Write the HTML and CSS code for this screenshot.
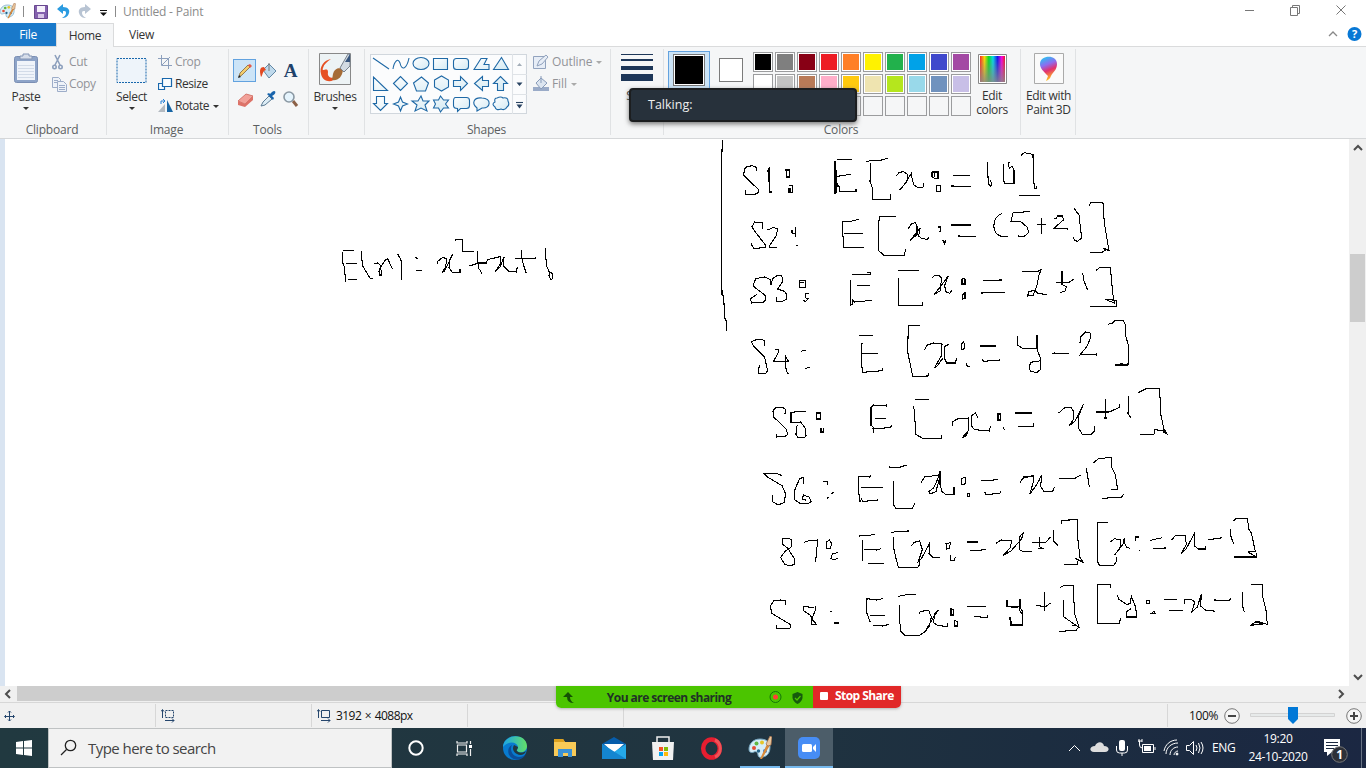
FILE: index.html
```html
<!DOCTYPE html>
<html lang="en">
<head>
<meta charset="utf-8">
<title>Untitled - Paint</title>
<link rel="stylesheet" href="styles.css">
</head>
<body>
<svg width="0" height="0" class="defs">
  <defs>
    <linearGradient id="rainbow"><stop offset="0" stop-color="#f22"/><stop offset=".18" stop-color="#fd0"/><stop offset=".35" stop-color="#0d2"/><stop offset=".52" stop-color="#0de"/><stop offset=".7" stop-color="#11e"/><stop offset=".87" stop-color="#f0d"/><stop offset="1" stop-color="#e12"/></linearGradient>
    <linearGradient id="fade" x2="0" y2="1"><stop offset="0" stop-color="#888" stop-opacity="0"/><stop offset="1" stop-color="#888" stop-opacity=".85"/></linearGradient>
    <linearGradient id="drop" x2=".3" y2="1"><stop offset="0" stop-color="#15d5f2"/><stop offset=".4" stop-color="#8d6cf0"/><stop offset=".65" stop-color="#e3306e"/><stop offset="1" stop-color="#ffbd20"/></linearGradient>
    <linearGradient id="edge1" x2="1"><stop offset="0" stop-color="#1ba4e8"/><stop offset="1" stop-color="#63df67"/></linearGradient>
    <linearGradient id="shapefill" x2="1" y2="1"><stop offset="0" stop-color="#fff"/><stop offset="1" stop-color="#d4eaf3"/></linearGradient>
    <symbol id="palette" viewBox="0 0 24 24">
      <path d="M12 3C5 3 1 8 1 13c0 4 3 4 5 3 2-1 4 0 4 3 0 2 2 3 5 2 5-1 7-5 7-10 0-5-4-8-10-8z" fill="#d7eef8" stroke="#72a4bf"/>
      <circle cx="6" cy="12" r="2" fill="#e54c35"/><circle cx="8.500" cy="7.500" r="2" fill="#62b743"/><circle cx="14" cy="6.500" r="2" fill="#e6c629"/><circle cx="10.500" cy="15" r="1.700" fill="#25658b"/><circle cx="17" cy="15" r="2" fill="#3379cd"/>
      <path d="M12 23l7-15 3 1-8 14z" fill="#d98a3a"/><path d="M18 8l4-8 2 1-1 8-3 1z" fill="#e9c69c" stroke="#9b6543" stroke-width=".7"/>
    </symbol>
  </defs>
</svg>
<div class="screen">
  <header class="titlebar">
    <svg class="title-icons" width="116" height="23" fill="none">
      <use href="#palette" x="-1" y="3" width="17" height="16"/>
      <path d="M23.500 6v11M115.500 6v11" stroke="#8b8b8b"/>
      <path d="M34.500 5.500h13v13h-13z" fill="#8461ae" stroke="#68478f"/><path d="M37 6h8v6h-8z" fill="#f6f1fb"/><path d="M38 14h6v4h-6z" fill="#d7c6e8"/>
      <path d="M57 9l6-5v3c5 0 7 3 6 6-1 4-4 5-7 5 3-2 4-3 4-5s-1-2-3-2v3z" fill="#2b9be0"/>
      <path d="M91 9l-6-5v3c-5 0-7 3-6 6 1 4 4 5 7 5-3-2-4-3-4-5s1-2 3-2v3z" fill="#b8c4d3"/>
      <path d="M100 10.500h7" stroke="#111"/><path d="M100 12.500h7l-3.500 3.500z" fill="#111"/>
    </svg>
    <span class="title">Untitled - Paint</span>
    <svg class="window-controls" width="120" height="23" fill="none" stroke="#777">
      <path d="M-1 10.500h9M44.500 7.500h7v8h-7zM46.500 7V5.500h7v8H52M90.500 5.500l9 9M99.500 5.500l-9 9"/>
    </svg>
  </header>
  <nav class="tabs">
    <span class="tab file">File</span><span class="tab home">Home</span><span class="tab view">View</span>
    <svg class="help" width="38" height="22" fill="none"><path d="M1 13l4-4 4 4" stroke="#888" stroke-width="1.300"/><circle cx="26.500" cy="11" r="7" fill="#0878d5"/><text x="26.500" y="15" text-anchor="middle" class="qmark">?</text></svg>
  </nav>

  <section class="ribbon">
    <div class="group g-clipboard">
      <div class="body">
        <div class="big paste"><svg width="26" height="31" fill="none"><rect x="1.500" y="3.500" width="23" height="26" rx="2" fill="#8ea4c8" stroke="#7b8fb4"/><path d="M4 8h18v19H4z" fill="#f0f4fa"/><path d="M5 12.500h16M5 15.500h16M5 18.500h16M5 21.500h16M5 24.500h16" stroke="#d2dbe8"/><path d="M7 6V3h3V1h6v2h3v3z" fill="#d7deea" stroke="#8395b5"/></svg><span>Paste</span><i class="caret"></i></div>
        <div class="small-list disabled">
          <div class="small"><svg width="15" height="17" fill="none" stroke="#8da0bd" stroke-width="1.600"><path d="M3 1l5 10M8 1L3 11"/><circle cx="2.500" cy="13" r="1.700"/><circle cx="8.500" cy="13" r="1.700"/></svg>Cut</div>
          <div class="small"><svg width="15" height="17" fill="#eef2f8" stroke="#9dadc9"><path d="M.5 1.500h6l2 2v8h-8z"/><path d="M5.500 5.500h6l3 3v7h-9zM2 4.500h4M2 6.500h3M7 9.500h6M7 11.500h6M7 13.500h6"/></svg>Copy</div>
        </div>
      </div><div class="label">Clipboard</div>
    </div>
    <div class="group g-image">
      <div class="body">
        <div class="big select"><svg width="31" height="31"><rect x="1" y="5.500" width="29" height="24" fill="#eef4fa" stroke="#1867ac" stroke-dasharray="2 1"/></svg><span>Select</span><i class="caret"></i></div>
        <div class="small-list">
          <div class="small disabled"><svg width="15" height="14" fill="none" stroke="#8da0bd"><path d="M3.500 0v10.500H14M0 3.500h10.500V14M4 10l8-8"/></svg>Crop</div>
          <div class="small"><svg width="15" height="14" fill="#f8fcff" stroke="#1867ac" stroke-width="1.200"><path d="M.5 6.500h6v6h-6z"/><path d="M4.500 1.500h9v8h-9z"/></svg>Resize</div>
          <div class="small"><svg width="15" height="14"><path d="M0 13h7V5z" fill="#b3bac1"/><path d="M9 1v12h6z" fill="#1765a5"/><path d="M3 5V2h4M5 0l2 2-2 2" fill="none" stroke="#2680d6"/></svg>Rotate<i class="caret"></i></div>
        </div>
      </div><div class="label">Image</div>
    </div>
    <div class="group g-tools">
      <div class="body tools">
        <span class="tool active"><svg width="20" height="20"><path d="M4 16l1-4 8-8 2 2-8 8z" fill="#f4cd6c" stroke="#80653a" stroke-width=".8"/><path d="M13 4l2-1 2 2-2 2z" fill="#e55a48"/><path d="M3 17l1-3 2 2z" fill="#222"/></svg></span>
        <span class="tool"><svg width="20" height="20"><path d="M5 9l6-6 7 7-7 7z" fill="#bed9ec" stroke="#6388a5"/><path d="M11 10V2" stroke="#777"/><path d="M6 6C2 6 1 9 3 16c2-2 1-6 5-7z" fill="#e34a22"/></svg></span>
        <span class="tool letter">A</span>
        <span class="tool"><svg width="20" height="20"><path d="M3 12l8-7 7 2-8 8z" fill="#f2a199" stroke="#d4796f"/><path d="M3 12l7 3v3l-7-2zM10 15l8-8v4l-8 7z" fill="#dd7268"/></svg></span>
        <span class="tool"><svg width="20" height="20"><path d="M3 17l2-4 6-6 3 3-7 6z" fill="#dcecf5" stroke="#5c7b94"/><path d="M9 5l6 6 1-2-2-2c5-2 4-7 0-4l-2 2-1-1z" fill="#1964ac"/></svg></span>
        <span class="tool"><svg width="20" height="20" fill="#e5f4fd" stroke="#8a98a3"><path d="M12 12l4 5" stroke-width="3" stroke="#8b6046"/><circle cx="8" cy="8" r="5" stroke-width="1.600"/></svg></span>
      </div><div class="label">Tools</div>
    </div>
    <div class="group g-brushes"><div class="body"><div class="big brushes"><svg width="32" height="32"><path d="M.5.500h31v31H.500z" fill="#edf3f5" stroke="#888"/><path d="M12 6C5 7 0 14 2 21c2 9 12 9 16 3-6 2-10 0-9-5 0-6-7 1-5-4 1-4 4-6 8-9z" fill="#e65023"/><path d="M14 21c1-5 6-8 10-4-1 7-5 11-11 10z" fill="#a56c37"/><path d="M21 15L29 1h2v12l-6 6z" fill="#d2dbe3" stroke="#77818d"/><path d="M26 9l5-8v8z" fill="#37567e"/></svg><span>Brushes</span><i class="caret"></i></div></div></div>
    <div class="group g-shapes">
      <div class="body">
        <svg class="shape-gallery" width="157" height="60" fill="url(#shapefill)" stroke="#1f69a6" stroke-width="1.100">
          <path d="M.5.500h156v59H.500z" fill="#fbfcfd" stroke="#d1d7dd"/><path d="M142.500 0v60M143 20.500h14M143 40.500h14" stroke="#dfe3e7"/>
          <path d="M3 4l16 11M23 15c1-7 5-12 7-6 2 9 7 5 9-5" fill="none"/><ellipse cx="51" cy="9.500" rx="8" ry="6"/><path d="M63.500 4.500h14v11h-14z"/><rect x="83.500" y="4.500" width="15" height="11" rx="3"/><path d="M104 15.500l7-11h6l-3 6h5v5zM123.500 15.500l8-12 7 12z"/>
          <path d="M3.500 23v13.500h14zM23.500 29.500l7-7 7 7-7 7zM43.500 29l8-6 7 6-3 8h-9zM64.500 26l7-4 7 4v7l-7 4-7-4zM83.500 26.500h7v-4l7 7-7 7v-4h-7zM118.500 26.500h-6v-4l-8 7 8 7v-4h6zM123.500 29.500l7-7 7 7h-4v7h-6v-7z"/>
          <path d="M6.500 42.500h8v7h3l-7 7-7-7h3zM30.500 43l2 5 5 2-5 2-2 5-2-5-5-2 5-2zM51 42l2 5h6l-4 4 2 6-6-3-6 3 2-6-5-4h6zM70.500 42l3 4h5l-3 4 3 4h-5l-3 4-2-4h-5l2-4-2-4h5z"/><path d="M85.500 43.500h11q3 0 3 3v5q0 3-3 3h-6l-3 3v-3q-4 0-4-3v-4q0-4 2-4z"/><path d="M107 54c-6-5-3-11 5-10 10 0 9 11 0 10l-5 3z"/><path d="M127 44q4-2 6 0 5-1 5 3 2 4-1 6-2 4-6 2-5 2-6-2-4-3 0-5-1-4 2-4z"/>
          <path d="M147 12h5l-2.500-3z" fill="#a3adb8" stroke="none"/><path d="M146.500 28.500h6l-3 3.500zM146.500 50.500h6l-3 4z" fill="#294362" stroke="none"/><path d="M146 48.500h7" stroke="#294362"/>
        </svg>
        <div class="small-list disabled shape-actions">
          <div class="small"><svg width="16" height="16" fill="#e7edf6" stroke="#92a3be"><path d="M.5 2.500h12v12H.500z"/><path d="M4 12l2-5 7-6 2 2-6 7z"/></svg>Outline<i class="caret"></i></div>
          <div class="small"><svg width="16" height="16"><path d="M0 11h16v4H0z" fill="#9aabc8"/><path d="M3 7l5-5 6 5-6 6z" fill="#dce5f0" stroke="#889bb9"/><path d="M8 0v7" stroke="#889bb9"/></svg>Fill<i class="caret"></i></div>
        </div>
      </div><div class="label">Shapes</div>
    </div>
    <div class="group g-size"><div class="body"><div class="big"><svg width="32" height="31" fill="#1d3658"><path d="M0 2h32v1H0zM0 7h32v2H0zM0 14h32v4H0zM0 22h32v7H0z"/></svg><span>Size</span></div></div></div>
    <div class="group g-colors">
      <div class="body">
        <div class="color-one"><span></span></div><div class="color-two"></div>
        <div class="palette">
          <b class="black"></b><b class="gray"></b><b class="maroon"></b><b class="red"></b><b class="orange"></b><b class="yellow"></b><b class="green"></b><b class="blue"></b><b class="indigo"></b><b class="purple"></b>
          <b class="white"></b><b class="silver"></b><b class="brown"></b><b class="pink"></b><b class="gold"></b><b class="cream"></b><b class="lime"></b><b class="aqua"></b><b class="steel"></b><b class="lavender"></b>
          <b></b><b></b><b></b><b></b><b></b><b></b><b></b><b></b><b></b><b></b>
        </div>
        <div class="big edit-colors"><svg width="29" height="30"><path d="M.5.500h28v29H.500z" fill="#fff" stroke="#888"/><path d="M2 2h25v26H2z" fill="url(#rainbow)"/><path d="M2 2h25v26H2z" fill="url(#fade)"/></svg><span>Edit<br>colors</span></div>
      </div><div class="label">Colors</div>
    </div>
    <div class="group g-paint3d"><div class="body"><div class="big edit-3d"><svg width="30" height="31"><path d="M.5.500h29v30H.500z" fill="#fafafa" stroke="#aaa"/><path d="M12 28l2-5c-5-5-8-8-8-12 0-9 17-10 17 0 0 6-4 8-6 12-1 3-3 4-5 5z" fill="url(#drop)"/></svg><span>Edit with<br>Paint 3D</span></div></div></div>
  </section>

  <main class="workspace">
    <div class="gutter"></div>
    <svg class="canvas" viewBox="5 139 1344 547" width="1344" height="547">
      <g class="ink" transform="translate(320 220) scale(.33333)">
        <path d="M70 91h32M67 95v30l6 15 4 45M77 130h33M84 178h27M124 94l3 42 12 20 12 20 8 1M163 132l10-3 9 8-5 18 1 10h6v-12l-4-9 17-25 6-3 14 31M233 102l10 18 2 59M285 112l8 4M288 150l17 2M353 133v-9l15-12 12 4-3 24-11 19 7-6 23-44 3-7-11 18-1 23 10 14h23v-11M405 60l22-1v35h34M453 138l20-9M472 93l3 50 11 17M449 138l25-9h25l3-10 38-9 3 20-18 25 14-12 13-31-2 25 17 18 22 1 3-16M604 90v20l7 26 8 24M585 115h62v-5M676 85l3 50 8 20 9 4 1 17-5 3-5-12 1-14"/>
      </g>
      <g class="ink" transform="translate(700 140) scale(.33333)">
        <path d="M67 0l-3 100 2 364 5 5 3 65 4 5"/>
        <path d="M169 92v-10l-13-5-20 5-6 23 15 15 30 28v10l-13 6-26-1v-12M201 94l6-9v40l2 31h6M258 90h11v21h-10zM267 137h10v20h-10v-10h5v9M411 58h44M405 62v100M408 90l1 70 3-30 5 10 3 15h50v-6l-4 1M412 109l40-6M498 65l14-3h26l25-7M512 70l-2 55 7 18v36h55v-16M589 107l9-10 13-2 11 8 2 17-26 31 18-20 20-35-2 9 7 29 12 8h15l4-7-2-7M696 96h18v19h-11l-7-4v-13l7-2v16M709 137h12v17h-12zM759 107l51-1M753 138l59 1M862 67l3 64 8 8 2-10-5-7M911 71v46l2 14h29V89l-6-10-8 6-3-14 4-6M963 46l10-8 26 5 1 73 4 29h6v-7M957 166h63"/>
        <path d="M188 266v-17l-24-3-8 14 8 13 32 42-1 8-34 2-8-14M203 270l17-8 12 5-2 19-21 30-1 6h22M286 260v32M276 269v10l10 2M288 316h7M476 238l-28 7h-20v34l4 44 59-1M433 281h55M588 229h-50l-3 37 1 66 16 14h61l4-18M625 266l9-14 12-4 5 10v26l-20 17 30-38-5 25 10 8 17 2 3-6M715 261h7v14h-6M728 299l5 13 4-9-8 2M753 255h59M775 288l52 2M905 221q-20 6-23 33t22 35l21 1M990 214l-51 5-6 24 28 1 21 18 4 15-13 12-20-1M1010 252l29 2M1026 233l-2 50M1063 236h6l4-8h15l2 12-28 25 41 2M1122 205l15 20 8 70-13 9-9-4-3-8M1168 197l5-10 36 2 4 60 14 84M1171 338l38-2 7-6-6-6 18 9"/>
        <path d="M213 436l-3-18-16-7-27 5-8 22 36 28 1 14-8 8-33 1-4-13 20-13M213 436l5-20 12-8 15-1 4 16-16 24 20 7 7 9-2 16-12 6h-15l-3-15M298 422h18v20h-18zM299 427h13M327 461h-11v12l8 3-7 8-7-2M455 403l57 1v-7h-12M452 419v76l5-1v-14l7 6 52-5M472 436h37M594 391h62M595 415v82h72v-12M697 414l6-8h14l8 8-5 39-17 10 20-25 22-31-11 29 3 19 13 5 6-10M787 414l8 4v14h-9v-15M788 464l7-6v18l-7 1zM849 421l57-1M843 459l73-1M967 395h45l12-7-8 20-4 25-12 32-17 3 3-14 20-2 8 9 26 2M1069 428h36l17-11M1086 394v39l13 7-3 13-15 5M1148 399l4 24 11 28M1188 391l12-9h31l7 76 5 31-28-11 35 3v15M1170 499h80v-6"/>
      </g>
      <g class="ink" transform="translate(720 310) scale(.33333)">
        <path d="M14 0v22l6 14v27M134 107V91l-20-4-20 8 6 12 34 35 9 40-6 9h-21l-2-8 5-17M165 120l11-1-1 9-15 27h48M208 157l-11-17 1 35 4 15h5M242 124l16-4M255 176l14-4M417 76h43M426 99l-2 60 4 28 60-5v-7M425 130h50M600 46h-35l-2 79 15 74 46-1 3-8M613 120l9-15 19-6 25 3-1 34-22 38 9-7 17-23M686 103l-11 6-2 35 7 15h26l4-14M724 103l7-7 4 15-5 8h-5zM738 160l4 9 9-1M780 108h48M787 147l3 7 49-4M893 79l-1 26 15 10h44V76M950 114l12 33v31l-11 9-18-2-5-9 3-19 32-5M996 130h52M1003 128l3 3M1080 98l3-19 13-13 14 2 2 14-11 27-21 26 50-3v6M1164 43l14-4 7-7 25 1 6 10v30l10 37-2 55h-39l24-5"/>
        <path d="M195 312l1-14-9-6-20 1-8 10 1 17 38 37 5 16-7 6-27 2v-8M257 304h-23l-21 4v30l29-2 14 19 2 22-4 5h-21l-5-9 1-23 6-6M289 309h12v18h-11zM303 354v12h7v-11M499 281v7l-40-3-6 8v53l7 6v16l-1-12 52-3 4-7M464 325h33M581 288l3 25 3 60 21 12h56v-9M586 268h41M698 348l1-13 13-8 34-3v37l-20 23 12-7 7-16M774 323l-8-14-10 7-2 32 10 11 44 4 3-14M833 312h8v18h-8zM835 313v16M850 352l4 9M886 309h49M895 350h45v-10M1016 309l18-16h20l8 13-2 22-12 19 17-14 26-52-17 42 3 34 10 16h27l9-10v-15M1128 306h40l30-14v-11M1156 268v57M1151 324h9M1226 259l-2 51 10 15M1254 248l25-12h40l3 75 12 57M1260 373h42l3-14 31 4 4 8-12-6"/>
      </g>
      <g class="ink" transform="translate(740 450) scale(.33333)">
        <path d="M126 77l-14-6-38 1 10 10 42 25 11 25-5 26-18 7-16-10v-21M191 103V83l-12 2-15 36-1 28 15 10 27 2 9-7-7-13-17-6-3 12 12 4M249 96l13-2v10M261 145l6-3M272 133l9-7M392 76l-2 5-33-1-2 37 5 39 4-9 4 7 44-3v-4M363 112h66M447 51l31 1 23-7M461 94l-1 70 8 11 49 1 7-16M543 97l11-16 29-4 17 1-12 47-18 7-3-8 14-10 12-27 7-23v40l6 20 10 9h26v-22M664 87l11-6 3 17-6 6h-7zM682 131l8 1-1 9-7-2zM723 91l29 1 22-5M735 127l1 6 43-2 3-8M840 96l12-13 29-5v15l-11 38 16-21 14-24"/>
        <path d="M155 292l-1-22-6-5-21 1v17l16 11 21 34-1 15-13 5-16-5-12-20 13-19 18-12M193 277l16-6 24-1-6 65M260 276l8-7 7 12-4 15h-11zM294 308l-17 3-4 15 10 3 10-4M358 259l5-4 17 2 26-4M368 269v63M372 299l40 1 12-5M383 340h49M453 247l27-3 26-1M461 262l-1 28 8 35 7 27h59l5-9-1-17M514 288l9-11 16-4 8 26-12 36 8-7 27-50-3 33 10 10 24 2M618 281l14-3-4 16-9 4zM632 316l1 15 10-1 3-8M682 276h32M689 300l17 3 31-5"/>
        <path d="M137 464v-11l-15-3-21 3-10 15 4 22 57 34-2 11h-39l-1-11M221 473l-30-4v13l20 14 8 15 11 13-15-1-1-14 12-28v-14M271 484h5M282 519h15M428 446l-18 4-29-4-1 42 11 29M391 497h43M400 527l30 1 16-5M475 439l30-6h22M480 465l-2 35 4 43 12 13h44l17-11 13-16 6-28-8-20-24 3-5 7M557 542l24-41 14-21-10 11-5 26 13 10 30 2v-10M632 476l8 4v15h-8zM635 473v22M644 512l9 3v13h-9zM682 469h55M701 500l41 2v-8M801 449v18l15 5h19M838 447v34l9 12v31l-31 1-6-24"/>
      </g>
      <g class="ink" transform="translate(1000 450) scale(.33333)">
        <path d="M60 97l11-16 30-4v15l-11 38 18-22 17-33-3 34 9 15 28-1 4-12M178 86h45l21-12M259 55l9 55M279 39l17-13 39-4v29l11 23 7 44h-20M307 145l59-4 4-8"/>
        <path d="M-12 280l15-10 31 2-2 20-23 25 25-15 31-36 5-17-10 9-1 41 10 6 28-1M97 277h40l14-15M119 260v30l9 5h-14M160 239l2 35 12 12M184 222v-11l48-2v45l8 69 11 15-26-13M193 344h39l1-11M323 217h-31v117l6 12h43l8-12v-12M331 276l13-10 17 4-1 24-16 21 25-33 4-19 1 16 5 12 10 4M406 272v-11h11M418 300v4M451 271l36-8M459 295h36v-5M514 271l12-14h30l3 27-15 26 13-11 26-48 1 37 10 9h22v-9M623 268l34-2 10-4M692 237v20l9 25M700 213l9-8h33l5 34 7 10 12 55-22 2 22 13-10 2M770 308v13h-69"/>
        <path d="M19 451v18h40M60 447v25l9 14-2 40H33l-4-24M107 467l31 2 14-10M133 427v57M180 413l10-6h29l5 85 13 40-41-28-6-4 1-50M176 545l53-5 8-10M232 525l-15 2M332 413v-10h-40v117h67l2-17M352 434l4 13 23 16 12-2 3-22 13 33 3 29h-31v-16l14-9M439 452h9v8h-9zM451 490h15l-4-6-9 8M493 448h37M507 481h41M553 463l2-15h19l10 8-8 29 16-14 12-38-2 35 14 12 24 1 4 6M642 450l46 1 5-7M727 427v39l6 19M753 403h35v36l10 42 4 42-31-9-20 12 37-4-24-8"/>
      </g>
    </svg>
    <div class="vscroll"><svg width="17" height="17" fill="none" stroke="#4d4d4d" stroke-width="2"><path d="M5 11l4-4 4 4"/></svg><div class="vthumb"></div><svg width="17" height="17" fill="none" stroke="#4d4d4d" stroke-width="2"><path d="M5 6l4 4 4-4"/></svg></div>
  </main>

  <div class="hscroll"><svg width="17" height="15" fill="none" stroke="#4d4d4d" stroke-width="2"><path d="M10 4L6 8l4 4"/></svg><div class="hthumb"></div><svg width="17" height="15" fill="none" stroke="#4d4d4d" stroke-width="2"><path d="M7 4l4 4-4 4"/></svg></div>
  <footer class="status">
    <div class="cell first"><svg width="11" height="12" fill="none" stroke="#25466d"><path d="M5.500 1v10M1 6.500h9M4 2.500l1.500-1.500L7 2.500M4 9.500L5.500 11 7 9.500M2 5L.5 6.500 2 8M9 5l1.500 1.500L9 8"/></svg></div>
    <div class="cell"><svg width="14" height="14" fill="none" stroke="#25466d"><rect x="4.500" y="1.500" width="8" height="7" stroke-dasharray="2 1"/><path d="M1.500 1v8M0 2.500l1.500-2L3 2.500M4 11.500h9M11 9.500l2 2-2 2"/></svg></div>
    <div class="cell"><svg width="14" height="14" fill="none" stroke="#25466d"><path d="M4.500 1.500h8v7h-8zM1.500 1v8M0 2.500l1.500-2L3 2.500M4 11.500h9M11 9.500l2 2-2 2"/></svg><span class="dimensions">3192 × 4088px</span></div>
    <div class="cell"></div><div class="cell spacer"></div>
    <div class="zoom"><span>100%</span>
      <svg width="142" height="24" fill="#f5f5f5" stroke="#777"><circle cx="8" cy="12" r="7.300"/><path d="M4 12h8" stroke="#444" stroke-width="2"/><path d="M26.500 9.500h84v3h-84z" fill="#e7eaea" stroke="#d3d3d3"/><path d="M64 3h10v12l-5 5-5-5z" fill="#0078d7" stroke="none"/><circle cx="130" cy="12" r="7.300"/><path d="M126 12h8M130 8v8" stroke="#444" stroke-width="2"/></svg>
    </div>
  </footer>
  <footer class="taskbar">
    <div class="start"><svg width="16" height="16" fill="#fff"><path d="M0 2l7-1v6.500H0zM8 1l8-1v7.500H8zM0 8.500h7V15l-7-1zM8 8.500h8V16l-8-1z"/></svg></div>
    <div class="search"><svg width="18" height="18" fill="none" stroke="#222" stroke-width="1.300"><circle cx="10.500" cy="6.500" r="5.200"/><path d="M6.500 10.500L1 16"/></svg><span>Type here to search</span></div>
    <div class="task narrow"><svg width="18" height="18"><circle cx="9" cy="9" r="6.700" fill="none" stroke="#fff" stroke-width="2"/></svg></div>
    <div class="task narrow"><svg width="17" height="17" fill="none" stroke="#eee" stroke-width="1.200"><path d="M1 1v2h10V1M1 16v-2h10v2M1.500 5h9v7h-9zM14.500 1v3M14.500 9v7"/><path d="M13 5h3v3h-3z" fill="#fff" stroke="none"/></svg></div>
    <div class="task edge"><svg width="24" height="24"><circle cx="12" cy="12" r="12" fill="#087bcf"/><path d="M0 11C0-2 23-4 24 10c0 6-7 8-10 5-1-1 1-2 1-4C14 5 4 5 0 11z" fill="url(#edge1)"/><path d="M9 9c-3 5 1 12 7 12 3 0 5-1 7-3-3 6-10 7-14 4-5-3-5-11 0-13z" fill="#0b4e9a"/><path d="M15 11c0 2-2 3-1 4 3 3 8 1 9 0-1 4-6 5-9 3-4-2-5-6-3-9z" fill="#213840"/></svg></div>
    <div class="task"><svg width="22" height="20"><path d="M0 1h9l2 3h11v14H0z" fill="#f8ca57"/><path d="M0 1h9l2 3H0z" fill="#dda11f"/><path d="M4 11h14v8h-4v-4H9v4H4z" fill="#3a91d5"/></svg></div>
    <div class="task"><svg width="24" height="22"><path d="M0 7l12-7 12 7-12 9z" fill="#075dab"/><path d="M2 7h20l-10 9z" fill="#fff"/><path d="M0 7l12 8 12-8v15H0z" fill="#25a9e9"/><path d="M0 7l24 15H0z" fill="#1485d0"/></svg></div>
    <div class="task"><svg width="24" height="24"><path d="M6 7V1h12v6" fill="none" stroke="#eee" stroke-width="1.500"/><path d="M1 6h22l-1 18H2z" fill="#f1f1f1"/><path d="M8 11h4v4H8z" fill="#f35325"/><path d="M13 11h4v4h-4z" fill="#81bc06"/><path d="M8 16h4v4H8z" fill="#05a6f0"/><path d="M13 16h4v4h-4z" fill="#ffba08"/></svg></div>
    <div class="task"><svg width="24" height="23"><ellipse cx="11.500" cy="11.500" rx="8.300" ry="9" fill="none" stroke="#e71e30" stroke-width="4.500"/><path d="M15 3c7 3 7 14 0 17" fill="none" stroke="#ef5358" stroke-width="3"/></svg></div>
    <div class="task running"><svg width="24" height="24"><use href="#palette" width="24" height="24"/></svg></div>
    <div class="task current"><svg width="22" height="22"><rect width="22" height="22" rx="5" fill="#478df5"/><rect x="4" y="7" width="10" height="8" rx="1.500" fill="#fff"/><path d="M15 10l3-3v8l-3-3z" fill="#fff"/></svg></div>
    <div class="tray">
      <svg width="137" height="24" fill="none" stroke="#fff"><path d="M2 15l5.500-5.500L13 15"/><path d="M27 16c-5 0-5-6 1-6 2-5 8-5 9 0 6 0 6 6 1 6z" fill="#ddd" stroke="none"/><rect x="52" y="4" width="6" height="11" rx="2" fill="#fff" stroke="none"/><path d="M49.500 10v4q0 3 3 3h5q3 0 3-3v-4M55 17v3"/><path d="M75.500 8.500h11v8h-11zM88 11v3M72.500 5v4q0 3 3 3M71 5h4M72 3v3M75 3v3"/><path d="M77 10h7v5h-7z" fill="#fff" stroke="none"/><path d="M99 18c0-6 5-11 12-11M103 19c0-5 4-8 8-8M107 19c0-2 2-4 4-4M97 15c1-6 6-11 13-11"/><circle cx="110" cy="18" r="1" fill="#fff"/><path d="M119.500 9.500h3l4-4v13l-4-4h-3zM129 9q2 3 0 6M131.500 7q3 5 0 10M134 6q4 6 0 12"/></svg>
      <span class="lang">ENG</span><span class="clock">19:20<br>24-10-2020</span>
      <svg class="notice" width="26" height="27"><path d="M1 2h16v13h-8l-5 4v-4H1z" fill="#fff"/><path d="M3 5.500h12M3 8.500h12M3 11.500h8" stroke="#1c2940"/><circle cx="16.500" cy="17.500" r="7.800" fill="#2d3038" stroke="#777"/><text x="16.500" y="22" text-anchor="middle">1</text></svg>
      <i class="desktop-edge"></i>
    </div>
  </footer>
  <div class="talking">Talking:</div>
  <div class="sharing">
    <div class="share-green"><svg width="11" height="11" fill="#145204"><path d="M0 5l5-5 5 5H7q0 4 4 6-7 0-7-6z"/></svg><strong>You are screen sharing</strong><svg width="34" height="14"><circle cx="6.500" cy="7" r="5.500" fill="none" stroke="#14750b"/><circle cx="6.500" cy="7" r="2.500" fill="#ff3f34"/><path d="M28.500 2l5 2v4q-1 4-5 6-4-2-5-6V4z" fill="#165b0d"/><path d="M26 8l2 2 3.500-4" fill="none" stroke="#4ec500" stroke-width="1.200"/></svg></div>
    <div class="share-red"><i></i><strong>Stop Share</strong></div>
  </div>
</div>
</body>
</html>
```
FILE: styles.css
```css
* { box-sizing: border-box; }
body { margin: 0; overflow: hidden; background: #fff; color: #333; font: 12px/14px "Open Sans", "Noto Sans", sans-serif; letter-spacing: -.35px; }
svg { display: block; flex: none; }
.defs { position: absolute; }
.screen { position: relative; width: 1366px; height: 768px; display: flex; flex-direction: column; }
.titlebar { height: 23px; display: flex; align-items: center; flex: none; }
.title { margin: 1px 0 0 7px; color: #8b8b8b; letter-spacing: -.2px; }
.window-controls { margin-left: auto; overflow: visible; }
.tabs { display: flex; height: 23px; flex: none; align-items: stretch; }
.tab { display: flex; align-items: center; justify-content: center; width: 56px; padding-top: 1px; }
.tab.file { background: #1979ca; color: #fff; }
.tab.home { width: 58px; background: #f5f6f7; border: 1px solid #dadbdc; border-bottom: 0; margin-bottom: -1px; position: relative; }
.tab.view { width: 55px; }
.help { margin-left: auto; }
.qmark { fill: #fff; font-size: 11px; font-weight: 700; }
.ribbon { height: 93px; display: flex; flex: none; background: #f5f6f7; border-top: 1px solid #dadbdc; border-bottom: 1px solid #d5d7d9; }
.group { display: flex; flex-direction: column; flex: none; position: relative; }
.group::after { content: ""; position: absolute; right: 0; top: 2px; width: 1px; height: 86px; background: #e0e2e4; }
.g-clipboard { width: 107px; }
.g-image { width: 122px; }
.g-tools { width: 80px; }
.g-brushes { width: 56px; }
.g-shapes { width: 246px; }
.g-size { width: 53px; }
.g-colors { width: 357px; }
.g-paint3d { width: 55px; }
.body { height: 74px; display: flex; flex: none; padding-top: 4px; }
.label { text-align: center; height: 17px; line-height: 16px; padding: 1px 3px 0 0; color: #5b5e61; letter-spacing: -.2px; }
.big { display: flex; flex-direction: column; align-items: center; width: 53px; padding-top: 2px; text-align: center; line-height: 13px; white-space: nowrap; }
.big span { margin-top: 6px; }
.big .caret { margin: 4px 0 0; }
.caret { width: 0; height: 0; border-left: 3px solid transparent; border-right: 3px solid transparent; border-top: 3px solid #333; margin-left: 4px; }
.small-list { display: flex; flex-direction: column; }
.small { display: flex; align-items: center; height: 22px; white-space: nowrap; }
.small svg { margin-right: 2px; }
.disabled { color: #929397; }
.disabled .caret { border-top-color: #aaa; }
.select { width: 49px; }
.g-image .small-list { margin-left: 2px; letter-spacing: -.42px; }
.tools { display: grid; grid-template-columns: 23px 23px 23px; grid-template-rows: 23px 23px; gap: 5px 0; padding: 12px 0 0 4px; }
.tool { width: 23px; height: 23px; display: flex; align-items: center; justify-content: center; }
.tool.active { background: #cce4f7; border: 1px solid #62a2df; }
.letter { font: bold 19px/22px "Liberation Serif", serif; color: #1e426b; }
.g-clipboard .big, .brushes { width: 52px; }
.brushes span { margin-top: 5px; }
.g-shapes .body { padding-left: 5px; }
.shape-gallery { margin-top: 3px; }
.shape-actions { margin-left: 6px; letter-spacing: -.1px; }
.shape-actions .small svg { margin-right: 3px; }
.g-size .big { width: 51px; padding-top: 1px; }
.g-size .body { padding-left: -2px; }
.g-colors .body { padding-left: 4px; }
.color-one { width: 42px; height: 67px; background: #cce4f7; border: 1px solid #62a2df; padding: 2px 4px; }
.color-one span { display: block; width: 32px; height: 32px; background: #000; border: 1px solid #777; outline: 1px solid #fff; outline-offset: -2px; }
.color-two { width: 24px; height: 24px; margin: 7px 10px 0 9px; background: #fff; border: 1px solid #7b7b7b; }
.palette { display: grid; grid-template-columns: repeat(10, 20px); grid-auto-rows: 20px; gap: 2px; margin-top: 1px; height: 64px; }
.palette b { border: 1px solid #9b9c9e; box-shadow: inset 0 0 0 1px #fff; }
.palette b:not([class]) { box-shadow: none; }
.edit-colors { width: 42px; padding-top: 3px; }
.edit-3d { width: 57px; padding-top: 2px; }
.edit-colors span, .edit-3d span { margin-top: 5px; line-height: 14px; }
.black { background: #000; } .gray { background: #7f7f7f; } .maroon { background: #880015; } .red { background: #ed1c24; } .orange { background: #ff7f27; }
.yellow { background: #fff200; } .green { background: #22b14c; } .blue { background: #00a2e8; } .indigo { background: #3f48cc; } .purple { background: #a349a4; }
.white { background: #fff; } .silver { background: #c3c3c3; } .brown { background: #b97a57; } .pink { background: #ffaec9; } .gold { background: #ffc90e; }
.cream { background: #efe4b0; } .lime { background: #b5e61d; } .aqua { background: #99d9ea; } .steel { background: #7092be; } .lavender { background: #c8bfe7; }
.workspace { height: 547px; display: flex; flex: none; }
.gutter { width: 5px; background: #d9e4f1; }
.canvas { background: #fff; }
.ink { fill: none; stroke: #000; stroke-width: 3.200; shape-rendering: crispEdges; }
.vscroll { width: 17px; background: #f0f0f0; display: flex; flex-direction: column; justify-content: space-between; }
.vthumb { width: 15px; height: 68px; margin: 0 0 249px 1px; background: #cdcdcd; }
.hscroll { height: 16px; flex: none; display: flex; background: #f0f0f0; padding-right: 17px; }
.hthumb { width: 680px; height: 15px; background: #cdcdcd; margin-right: auto; }
.status { height: 26px; flex: none; display: flex; background: #f0f0f0; border-top: 1px solid #d7d7d7; color: #111; }
.cell { width: 156px; height: 23px; margin-top: 1px; border-right: 1px solid #d7d7d7; display: flex; align-items: center; gap: 5px; padding-left: 5px; letter-spacing: -.2px; }
.dimensions { letter-spacing: -.5px; white-space: nowrap; }
.dimensions { letter-spacing: -.55px; word-spacing: 1px; }
.cell.first { padding-left: 4px; }
.cell.spacer { width: 544px; }
.zoom { display: flex; align-items: center; padding-left: 21px; gap: 6px; }
.zoom span { width: 29px; }
.taskbar { height: 40px; flex: none; display: flex; background: linear-gradient(90deg, #213940, #203440 55%, #1c2d40 76%, #1b2742); color: #fff; }
.start { width: 48px; display: flex; align-items: center; justify-content: center; }
.search { width: 344px; background: #f2f2f2; border: 1px solid #bfc2c3; display: flex; align-items: center; gap: 10px; padding-left: 11px; color: #444; font-size: 15px; letter-spacing: -.55px; }
.task { width: 49px; display: flex; align-items: center; justify-content: center; flex: none; }
.task.narrow { width: 48px; }
.task.edge { width: 52px; padding-left: 1px; }
.task.running { box-shadow: inset 0 -2px #76b9ed; width: 40px; margin: 0 5px 0 4px; }
.task.current { width: 48px; background: #4c5d69; box-shadow: inset 0 -2px #76b9ed; }
.tray { margin-left: auto; display: flex; align-items: center; }
.lang { width: 30px; margin-left: 8px; }
.clock { width: 72px; text-align: center; line-height: 18px; }
.notice { margin: 4px 12px 0 9px; }
.notice text { font-size: 12px; font-weight: 700; fill: #fff; }
.desktop-edge { width: 1px; height: 40px; background: #687384; margin-right: 4px; }
.talking { position: absolute; left: 629px; top: 88px; width: 228px; height: 34px; padding: 8px 17px; border: 2px solid #1c1e20; border-radius: 4px; background: #27313b; box-shadow: 0 2px 5px #777; color: #eee; font-size: 12.500px; letter-spacing: 0; }
.sharing { position: absolute; left: 556px; top: 686px; width: 345px; height: 22px; display: flex; border-radius: 0 0 5px 5px; overflow: hidden; box-shadow: 0 1px 3px #8889; letter-spacing: -.4px; }
.share-green { width: 257px; display: flex; align-items: center; padding-left: 7px; background: #4bc500; color: #203126; }
.share-green strong { width: 164px; text-align: center; margin: 1px 18px 0 13px; letter-spacing: -.5px; white-space: nowrap; }
.share-green strong { letter-spacing: -.55px; }
.share-red { width: 88px; display: flex; align-items: center; gap: 7px; background: #e12828; color: #fff; padding: 0 0 2px 7px; letter-spacing: -.55px; }
.share-red i { width: 8px; height: 8px; background: #fff; border-radius: 1px; flex: none; }
.share-red strong { white-space: nowrap; }
```
